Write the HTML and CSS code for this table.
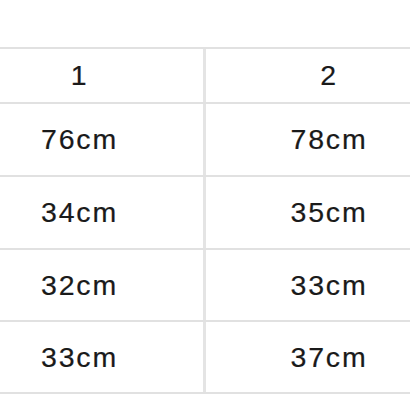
FILE: index.html
```html
<!DOCTYPE html>
<html>
<head>
<meta charset="utf-8">
<link rel="stylesheet" href="styles.css">
</head>
<body>
<div class="size-table">
  <div class="row head">
    <div class="cell">1</div>
    <div class="cell">2</div>
  </div>
  <div class="row">
    <div class="cell">76cm</div>
    <div class="cell">78cm</div>
  </div>
  <div class="row">
    <div class="cell">34cm</div>
    <div class="cell">35cm</div>
  </div>
  <div class="row short">
    <div class="cell">32cm</div>
    <div class="cell">33cm</div>
  </div>
  <div class="row short">
    <div class="cell">33cm</div>
    <div class="cell">37cm</div>
  </div>
</div>
</body>
</html>
```

FILE: styles.css
```css
html, body {
  margin: 0;
  padding: 0;
  background: #ffffff;
  overflow: hidden;
}

body {
  width: 410px;
  height: 410px;
  font-family: "Liberation Sans", Arial, sans-serif;
  color: #1a1a1a;
}

.size-table {
  margin-top: 47px;
  margin-left: -44px;
  width: 496px;
  border-top: 2px solid #e1e1e1;
}

.row {
  display: grid;
  grid-template-columns: 250px 246px;
  height: 71px;
  border-bottom: 2px solid #e1e1e1;
}

.row.head {
  height: 53px;
}

.row.short {
  height: 70px;
}

.cell {
  display: flex;
  align-items: center;
  justify-content: center;
  font-size: 28.5px;
  letter-spacing: 1.8px;
  -webkit-text-stroke: 0.2px #1a1a1a;
}

.cell:first-child {
  border-right: 3px solid #e4e4e4;
}
```
